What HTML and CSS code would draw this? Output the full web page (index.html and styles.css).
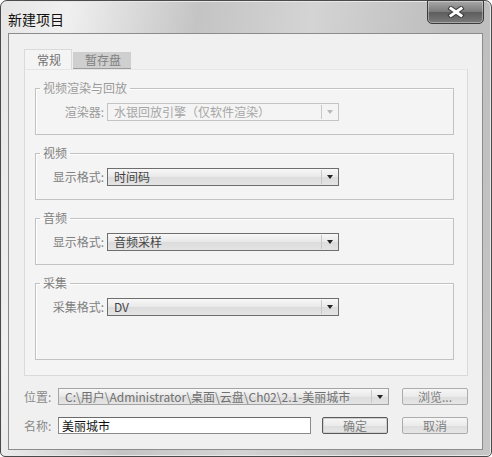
FILE: index.html
```html
<!DOCTYPE html>
<html lang="zh-CN">
<head>
    <meta charset="UTF-8">
    <title>新建项目</title>
    <link rel="stylesheet" href="styles.css">
</head>
<body>
    <div class="window">
        <div class="titlebar">
            <span class="title">新建项目</span>
            <button class="close">
                <svg width="18" height="12" viewBox="0 0 18 12">
                    <path d="M4 2.5 L14 9.5 M14 2.5 L4 9.5" stroke="#3a3a3a" stroke-width="5" stroke-linecap="square"/>
                    <path d="M4 2.5 L14 9.5 M14 2.5 L4 9.5" stroke="#ffffff" stroke-width="3" stroke-linecap="square"/>
                </svg>
            </button>
        </div>
        <div class="client">
            <div class="tabs">
                <div class="tab active">常规</div>
                <div class="tab">暂存盘</div>
            </div>
            <div class="panel">
                <fieldset class="group disabled">
                    <legend>视频渲染与回放</legend>
                    <div class="row">
                        <label>渲染器:</label>
                        <div class="combo">水银回放引擎（仅软件渲染）<span class="drop"></span></div>
                    </div>
                </fieldset>
                <fieldset class="group">
                    <legend>视频</legend>
                    <div class="row">
                        <label>显示格式:</label>
                        <div class="combo">时间码<span class="drop"></span></div>
                    </div>
                </fieldset>
                <fieldset class="group">
                    <legend>音频</legend>
                    <div class="row">
                        <label>显示格式:</label>
                        <div class="combo">音频采样<span class="drop"></span></div>
                    </div>
                </fieldset>
                <fieldset class="group tall">
                    <legend>采集</legend>
                    <div class="row">
                        <label>采集格式:</label>
                        <div class="combo">DV<span class="drop"></span></div>
                    </div>
                </fieldset>
            </div>
            <div class="footer-row">
                <span class="field-label">位置:</span>
                <div class="combo path">C:\用户\Administrator\桌面\云盘\Ch02\2.1-美丽城市<span class="drop"></span></div>
                <button class="btn light">浏览...</button>
            </div>
            <div class="footer-row">
                <span class="field-label">名称:</span>
                <div class="name-input">美丽城市</div>
                <button class="btn default">确定</button>
                <button class="btn light">取消</button>
            </div>
        </div>
    </div>
</body>
</html>
```

FILE: styles.css
```css
body {
    margin: 0;
    font-family: "Noto Sans CJK SC", "Microsoft YaHei", sans-serif;
    font-size: 12px;
    line-height: 16px;
    color: #666;
}
.window {
    width: 492px;
    height: 457px;
    box-sizing: border-box;
    border: 1px solid #4a4a4a;
    border-radius: 7px 7px 5px 5px;
    padding: 0 8px 6px 7px;
    display: flex;
    flex-direction: column;
    background: linear-gradient(100deg, #e6e6e6 0%, #f0f0f0 12%, #c4c4c4 35%, #d4d4d4 55%, #bcbcbc 80%, #c6c6c6 100%);
    box-shadow: inset 0 0 0 1px #e8e8e8;
}
.titlebar {
    height: 32px;
    display: flex;
    justify-content: space-between;
    align-items: flex-start;
}
.title {
    font-size: 14px;
    color: #111;
    margin-top: 9px;
    line-height: 18px;
}
.close {
    width: 57px;
    height: 24px;
    margin: -1px -1px 0 0;
    padding: 0;
    border: 1px solid #3c3c3c;
    border-radius: 0 0 5px 5px;
    background: linear-gradient(#a8a8a8, #7c7c7c 48%, #5e5e5e 52%, #7a7a7a);
    display: flex;
    align-items: center;
    justify-content: center;
    box-shadow: inset 0 0 0 1px rgba(255, 255, 255, 0.35);
}
.client {
    flex: 1;
    background: #f0f0f0;
    border: 1px solid #8c8c8c;
    padding: 16px 14px 0 15px;
    display: flex;
    flex-direction: column;
}
.tabs {
    display: flex;
    align-items: flex-end;
    height: 19px;
}
.tab {
    height: 16px;
    padding: 0 10px 0 12px;
    background: #cfcfcf;
    border-bottom: 1px solid #9c9c9c;
    color: #808080;
    margin-left: 1px;
}
.tab.active {
    height: 19px;
    line-height: 19px;
    background: #f4f4f4;
    border: 1px solid #dadada;
    border-bottom: none;
    margin-left: 0;
    color: #707070;
}
.panel {
    height: 307px;
    box-sizing: border-box;
    background: #f4f4f4;
    border: 1px solid #dadada;
    border-top-color: #e6e6e6;
    padding: 10px 13px 0 10px;
}
.group {
    margin: 0 0 10px 0;
    padding: 7px 0 13px 0;
    border: 1px solid #c2c2c2;
    box-shadow: inset 1px 1px 0 #fff;
}
.group.tall {
    padding-bottom: 43px;
}
.group legend {
    margin-left: 4px;
    padding: 0 3px;
    color: #808080;
}
.row {
    display: flex;
    align-items: center;
}
.row label {
    width: 68px;
    text-align: right;
    margin-right: 3px;
    color: #808080;
}
.combo {
    position: relative;
    width: 232px;
    height: 18px;
    box-sizing: border-box;
    border: 1px solid #6e6e6e;
    padding-left: 6px;
    background: linear-gradient(#f8f8f8, #e8e8e8 50%, #dcdcdc 51%, #e4e4e4);
    color: #444;
    line-height: 16px;
    white-space: nowrap;
}
.drop {
    position: absolute;
    right: 0;
    top: 1px;
    bottom: 1px;
    width: 16px;
    border-left: 1px solid #c8c8c8;
}
.drop::after {
    content: "";
    position: absolute;
    left: 5px;
    top: 5px;
    border-left: 3px solid transparent;
    border-right: 3px solid transparent;
    border-top: 4px solid #222;
}
.disabled legend,
.disabled label {
    color: #9a9a9a;
}
.disabled .combo {
    border-color: #c4c4c4;
    background: #f4f4f4;
    color: #a6a6a6;
}
.disabled .drop::after {
    border-top-color: #b8b8b8;
}
.footer-row {
    display: flex;
    align-items: center;
    margin-top: 12px;
    height: 17px;
}
.footer-row + .footer-row {
    margin-top: 12px;
}
.field-label {
    width: 34px;
    color: #8a8a8a;
}
.combo.path {
    width: 331px;
    height: 17px;
    border-color: #a4a4a4;
    color: #707070;
    padding-left: 6px;
}
.name-input {
    width: 253px;
    height: 17px;
    box-sizing: border-box;
    border: 1px solid #8a8a8a;
    border-top-color: #6a6a6a;
    background: #fff;
    color: #111;
    padding-left: 3px;
    line-height: 15px;
}
.btn {
    width: 66px;
    height: 17px;
    box-sizing: border-box;
    margin-left: 13px;
    padding: 0;
    font-family: inherit;
    font-size: 12px;
    line-height: 14px;
    color: #808080;
    border: 1px solid #acacac;
    border-radius: 2px;
    background: linear-gradient(#f6f6f6, #ebebeb 50%, #dddddd 51%, #e6e6e6);
}
.btn.default {
    margin-left: 11px;
    border-color: #5a5a5a;
    box-shadow: inset 0 0 0 1px #cfcfcf;
}
.name-input + .btn {
    margin-left: 11px;
}
.btn.default + .btn {
    margin-left: 14px;
}
```
